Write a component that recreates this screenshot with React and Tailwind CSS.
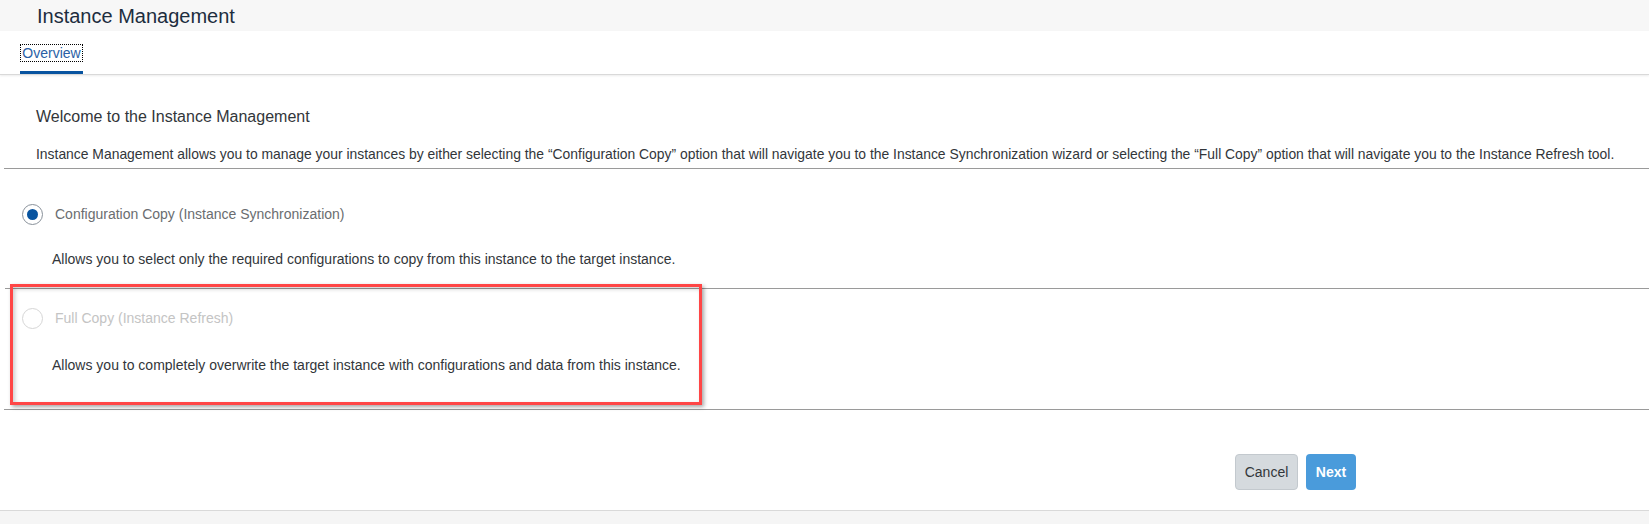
import React from "react";

function Radio({ checked, disabled }) {
  return (
    <span
      className={
        "flex h-[21px] w-[21px] shrink-0 items-center justify-center rounded-full border bg-white " +
        (disabled ? "border-[#d6d6d6]" : "border-[#89919a]")
      }
    >
      {checked && <span className="h-[11px] w-[11px] rounded-full bg-[#0854a0]" />}
    </span>
  );
}

export default function App() {
  return (
    <div className="relative h-[524px] w-[1649px] overflow-hidden bg-white font-['Liberation_Sans',Arial,sans-serif] text-[#32363a]">
      {/* Header */}
      <div className="flex h-[31px] items-center bg-[#f7f7f7] pl-[37px] text-[20px] leading-none text-[#1d2d3e]">
        Instance Management
      </div>

      {/* Tab bar */}
      <div className="flex h-[44px] items-stretch border-b border-[#d9d9d9] pl-[20px] shadow-[0_1px_2px_rgba(0,0,0,0.08)]">
        <div className="flex w-[63px] flex-col items-center justify-between">
          <div className="h-[3px]" />
          <span className="px-[1px] text-[14px] leading-[16px] text-[#2a5fa5] outline outline-1 outline-dotted outline-black">
            Overview
          </span>
          <div className="h-[3px] w-full bg-[#0854a0]" />
        </div>
      </div>

      {/* Welcome */}
      <div className="mt-[32px] pl-[36px] text-[16px] leading-[20px] text-[#32363a]">
        Welcome to the Instance Management
      </div>
      <div className="mt-[18px] pl-[36px] text-[13.9px] leading-[18px] text-[#32363a]">
        Instance Management allows you to manage your instances by either selecting the “Configuration Copy” option that will navigate you to the Instance Synchronization wizard or selecting the “Full Copy” option that will navigate you to the Instance Refresh tool.
      </div>
      <div className="ml-[4px] mt-[5px] border-t border-[#9a9a9a]" />

      {/* Option 1 */}
      <div className="mt-[33px] flex h-[24px] items-center gap-[12px] pl-[22px]">
        <Radio checked />
        <span className="text-[14px] text-[#6a6d70]">Configuration Copy (Instance Synchronization)</span>
      </div>
      <div className="mt-[24px] pl-[52px] text-[14px] leading-[18px] text-[#32363a]">
        Allows you to select only the required configurations to copy from this instance to the target instance.
      </div>
      <div className="ml-[5px] mt-[20px] border-t border-[#9a9a9a]" />

      {/* Option 2 */}
      <div className="mt-[17px] flex h-[24px] items-center gap-[12px] pl-[22px]">
        <Radio disabled />
        <span className="text-[14px] text-[#c4c4c4]">Full Copy (Instance Refresh)</span>
      </div>
      <div className="mt-[26px] pl-[52px] text-[14px] leading-[18px] text-[#32363a]">
        Allows you to completely overwrite the target instance with configurations and data from this instance.
      </div>
      <div className="ml-[4px] mt-[35px] border-t border-[#9a9a9a]" />

      {/* Buttons */}
      <div className="mt-[44px] flex h-[36px] justify-end gap-[8px] pr-[293px]">
        <button className="h-[36px] w-[63px] rounded-[4px] border border-[#c3c9ce] bg-[#d5dade] text-[14px] text-[#32363a]">
          Cancel
        </button>
        <button className="h-[36px] w-[50px] rounded-[4px] bg-[#4a9bdb] text-[14px] font-bold text-white">
          Next
        </button>
      </div>

      {/* Footer */}
      <div className="mt-[20px] h-[20px] border-t border-[#d9d9d9] bg-[#f5f5f5]" />

      {/* Annotation box */}
      <div className="pointer-events-none absolute left-[10px] top-[284px] h-[121px] w-[692px] border-[3px] border-[#ff4646] shadow-[2px_2px_4px_rgba(0,0,0,0.35),inset_2px_2px_4px_rgba(0,0,0,0.2)]" />
    </div>
  );
}
